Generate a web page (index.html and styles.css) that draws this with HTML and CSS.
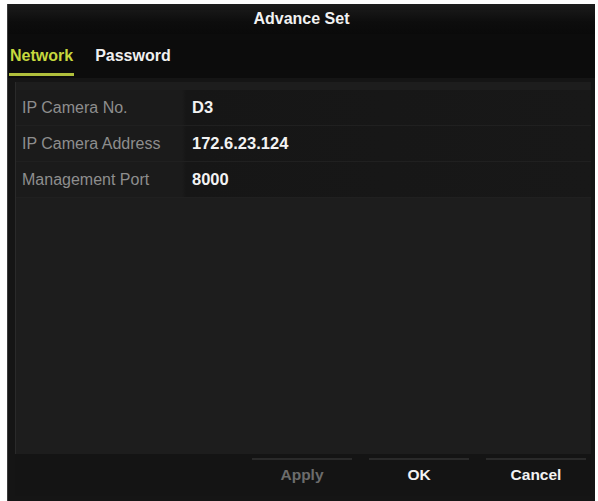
FILE: index.html
```html
<!DOCTYPE html>
<html>
<head>
<meta charset="utf-8">
<link rel="stylesheet" href="styles.css">
</head>
<body>
<div class="dialog">
  <div class="titlebar">Advance Set</div>
  <div class="tabs">
    <div class="tab active">Network</div>
    <div class="tab">Password</div>
  </div>
  <div class="content">
    <div class="panel">
      <div class="row"><span class="label">IP Camera No.</span><span class="value">D3</span></div>
      <div class="row"><span class="label">IP Camera Address</span><span class="value">172.6.23.124</span></div>
      <div class="row"><span class="label">Management Port</span><span class="value">8000</span></div>
    </div>
    <div class="buttons">
      <div class="btn disabled">Apply</div>
      <div class="btn">OK</div>
      <div class="btn">Cancel</div>
    </div>
  </div>
</div>
</body>
</html>
```
FILE: styles.css
```css
html, body {
  margin: 0;
  padding: 0;
  background: #ffffff;
  width: 598px;
  height: 501px;
  overflow: hidden;
}
body {
  padding: 4px 3px 0 7px;
  box-sizing: border-box;
  font-family: "Liberation Sans", Arial, sans-serif;
}
.dialog {
  height: 497px;
  background: #141414;
  display: flex;
  flex-direction: column;
  border-left: 1px solid #3a3a3a;
}
.titlebar {
  height: 30px;
  background: linear-gradient(#1c1c1c, #0d0d0d 60%, #0a0a0a);
  color: #f2f2f2;
  font-size: 16px;
  font-weight: bold;
  text-align: center;
  line-height: 30px;
}
.tabs {
  height: 44px;
  background: #0c0c0c;
  display: flex;
  align-items: flex-end;
  padding-left: 1px;
  gap: 20px;
}
.tab {
  color: #f0f0f0;
  font-size: 16px;
  font-weight: bold;
  line-height: 18px;
  padding: 0 1px 8px;
  border-bottom: 3px solid transparent;
  margin-bottom: 2px;
}
.tab.active {
  color: #c6d83e;
  border-bottom-color: #b0bf3c;
}
.content {
  flex: 1;
  background: #151515;
  display: flex;
  flex-direction: column;
  padding: 4px 4px 5px 7px;
}
.panel {
  flex: 1;
  background: #1d1d1d;
  border-left: 1px solid #2a2a2a;
  padding-top: 8px;
  display: flex;
  flex-direction: column;
}
.row {
  height: 36px;
  display: flex;
  align-items: center;
  background: linear-gradient(90deg, #1b1b1b 0, #1b1b1b 166px, #161616 170px, #181818 100%);
  border-bottom: 1px solid #202020;
  box-sizing: border-box;
}
.label {
  width: 170px;
  padding-left: 6px;
  color: #8e8e8e;
  font-size: 16px;
}
.value {
  color: #f2f2f2;
  font-size: 16.5px;
  font-weight: bold;
}
.buttons {
  height: 42px;
  display: flex;
  justify-content: flex-end;
  gap: 17px;
  padding-right: 5px;
  background: #141414;
}
.btn {
  width: 100px;
  border-top: 2px solid #2a2a2a;
  margin-top: 4px;
  color: #f2f2f2;
  font-size: 15.5px;
  font-weight: bold;
  text-align: center;
  line-height: 30px;
}
.btn.disabled {
  color: #6c6c6c;
}
```
